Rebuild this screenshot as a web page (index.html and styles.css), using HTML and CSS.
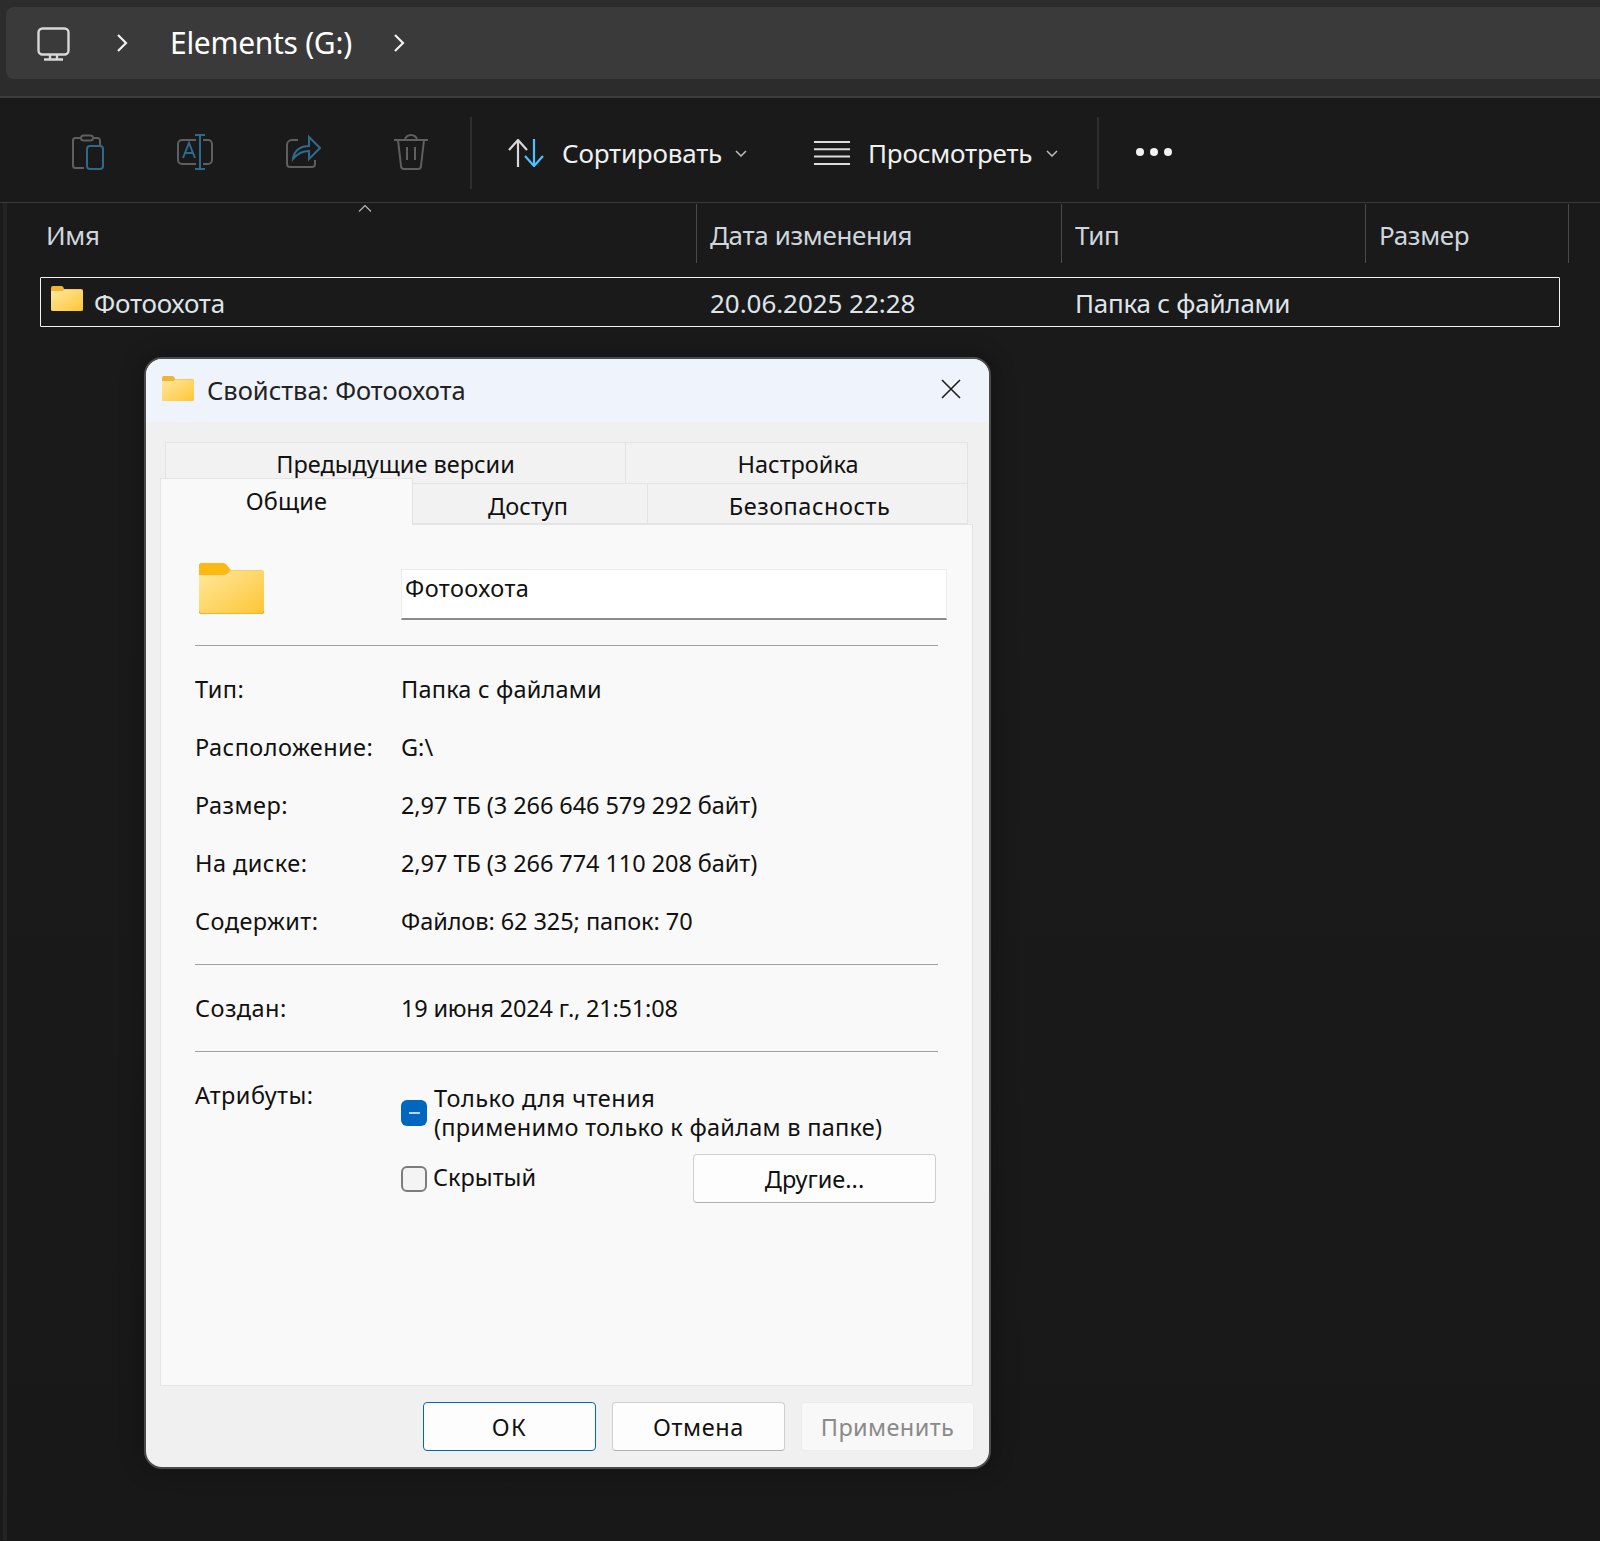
FILE: index.html
```html
<!DOCTYPE html>
<html lang="ru">
<head>
<meta charset="utf-8">
<title>Свойства: Фотоохота</title>
<link rel="stylesheet" href="styles.css">
</head>
<body>
<svg class="defs" width="0" height="0" aria-hidden="true">
  <defs>
    <linearGradient id="fg" x1="0" y1="0" x2="1" y2="1">
      <stop offset="0" stop-color="#ffe89e"/><stop offset="1" stop-color="#fdc636"/>
    </linearGradient>
    <symbol id="folder" viewBox="0 0 65 51">
      <path d="M3 0h20c2 0 3 .6 4.500 2l4.500 5h30a3 3 0 0 1 3 3v38a3 3 0 0 1-3 3H3a3 3 0 0 1-3-3V3a3 3 0 0 1 3-3z" fill="#f3bd4d"/>
      <path d="M3 0h20c2 0 3 .6 4.500 2L31 6.500c-1.500 2-3 4.500-6 5.500H0V3a3 3 0 0 1 3-3z" fill="#fdb913"/>
      <path d="M0 12h25c3 0 5-2.500 6.500-4.500H62a3 3 0 0 1 3 3V47.500a3 3 0 0 1-3 2.500H3a3 3 0 0 1-3-2.500z" fill="url(#fg)"/>
      <path d="M0 48a3 3 0 0 0 3 3h59a3 3 0 0 0 3-3" fill="none" stroke="#e9ad2e" stroke-width="1"/>
    </symbol>
    <symbol id="folder-s" viewBox="0 0 32 25">
      <path d="M2 0h8c1 0 2 .5 2.500 1.500L13 3h17a2 2 0 0 1 2 2v18a2 2 0 0 1-2 2H2a2 2 0 0 1-2-2V2a2 2 0 0 1 2-2z" fill="#f0b534"/>
      <path d="M0 5h11c1 0 1.500-.6 2-1.500h17a2 2 0 0 1 2 2V23a2 2 0 0 1-2 2H2a2 2 0 0 1-2-2z" fill="url(#fg)"/>
    </symbol>
  </defs>
</svg>

<header class="top">
  <nav class="address">
    <svg class="i-pc" viewBox="0 0 33 34" fill="none" stroke="#d8d8d8" stroke-width="2.400"><rect x="1.500" y="1.500" width="30" height="26" rx="4"/><path d="M7 32.500h19M13 28v4M20 28v4"/></svg>
    <svg class="i-chev first" viewBox="0 0 12 18" fill="none" stroke="#f0f0f0" stroke-width="2.200"><path d="M2 1l8 8-8 8"/></svg>
    <span class="crumb">Elements (G:)</span>
    <svg class="i-chev" viewBox="0 0 12 18" fill="none" stroke="#f0f0f0" stroke-width="2.200"><path d="M2 1l8 8-8 8"/></svg>
  </nav>
</header>

<section class="toolbar">
  <div class="tool-icons">
    <svg class="tool" viewBox="0 0 36 36" fill="none" stroke-width="2"><path d="M12 4H6.500A2.500 2.500 0 0 0 4 6.500v25A2.500 2.500 0 0 0 6.500 34H15M25 4h3.500A2.500 2.500 0 0 1 31 6.500V11" stroke="#5f5f5f"/><rect x="12" y="1.500" width="12" height="5" rx="2.500" stroke="#5f5f5f"/><rect x="18" y="12" width="16" height="23" rx="3" stroke="#2f6a8c"/></svg>
    <svg class="tool" viewBox="0 0 36 36" fill="none" stroke-width="2"><path d="M19 6H5a4 4 0 0 0-4 4v16a4 4 0 0 0 4 4h14M26 6h5a4 4 0 0 1 4 4v16a4 4 0 0 1-4 4h-5" stroke="#5f5f5f"/><path d="M18 1h10M23 1v34M18 35h10M6 24l6-15 6 15M8 19h8" stroke="#2f6a8c"/></svg>
    <svg class="tool" viewBox="0 0 36 36" fill="none" stroke-width="2"><path d="M13 6H7a5 5 0 0 0-5 5v19a3 3 0 0 0 3 3h22a3 3 0 0 0 3-3v-4" stroke="#5f5f5f"/><path d="M8 25c1-9 8-13 16-13V3l11 11-11 11v-8c-7 0-12 3-16 8z" stroke="#2f6a8c"/></svg>
    <svg class="tool" viewBox="0 0 36 36" fill="none" stroke="#5f5f5f" stroke-width="2"><path d="M1 6h34M12 6c0-3 3-5 6-5s6 2 6 5M5 6l3 26a3 3 0 0 0 3 3h14a3 3 0 0 0 3-3l3-26M14 13v13M22 13v13"/></svg>
  </div>
  <span class="sep"></span>
  <button class="cmd sort">
    <svg class="i-sort" viewBox="0 0 36 28" fill="none" stroke-width="2.200"><path d="M10 28V1M1 11L10 1l9 10" stroke="#d8d8d8"/><path d="M26 0v27M17 17l9 10 9-10" stroke="#4cc2ff"/></svg>
    <span>Сортировать</span>
    <svg class="i-down" viewBox="0 0 12 7" fill="none" stroke="#bdbdbd" stroke-width="1.500"><path d="M1 1l5 5 5-5"/></svg>
  </button>
  <button class="cmd view">
    <svg class="i-view" viewBox="0 0 36 24" fill="none" stroke="#dcdcdc" stroke-width="2"><path d="M0 1h36M0 8.300h36M0 15.600h36M0 23h36"/></svg>
    <span>Просмотреть</span>
    <svg class="i-down" viewBox="0 0 12 7" fill="none" stroke="#bdbdbd" stroke-width="1.500"><path d="M1 1l5 5 5-5"/></svg>
  </button>
  <span class="sep sep2"></span>
  <div class="more"><i></i><i></i><i></i></div>
</section>

<main class="files">
  <div class="cols">
    <div class="col c-name">Имя<svg class="caret" viewBox="0 0 14 7" fill="none" stroke="#b5b5b5" stroke-width="1.200"><path d="M1 6.500l6-6 6 6"/></svg></div>
    <div class="col c-date">Дата изменения</div>
    <div class="col c-type">Тип</div>
    <div class="col c-size">Размер</div>
  </div>
  <div class="row">
    <div class="cell r-name"><svg class="fld-s"><use href="#folder-s"/></svg>Фотоохота</div>
    <div class="cell r-date">20.06.2025 22:28</div>
    <div class="cell">Папка с файлами</div>
  </div>
</main>

<div class="dialog">
  <div class="titlebar">
    <svg class="fld-s"><use href="#folder-s"/></svg>
    <span class="title">Свойства: Фотоохота</span>
    <svg class="close" viewBox="0 0 20 20" fill="none" stroke="#1c1c1c" stroke-width="1.600"><path d="M1 1l18 18M19 1L1 19"/></svg>
  </div>
  <div class="tabs">
    <div class="tabrow upper">
      <div class="tab t-prev">Предыдущие версии</div>
      <div class="tab t-set">Настройка</div>
    </div>
    <div class="tabrow lower">
      <div class="tab active">Общие</div>
      <div class="tab t-acc">Доступ</div>
      <div class="tab t-sec">Безопасность</div>
    </div>
  </div>
  <div class="panel">
    <div class="head">
      <svg class="fld-l"><use href="#folder"/></svg>
      <div class="name">Фотоохота</div>
    </div>
    <div class="sect grid">
      <div class="lbl">Тип:</div><div class="v-type">Папка с файлами</div>
      <div class="lbl">Расположение:</div><div>G:\</div>
      <div class="lbl">Размер:</div><div class="v-num">2,97 ТБ (3 266 646 579 292 байт)</div>
      <div class="lbl">На диске:</div><div class="v-num">2,97 ТБ (3 266 774 110 208 байт)</div>
      <div class="lbl">Содержит:</div><div class="v-num">Файлов: 62 325; папок: 70</div>
    </div>
    <div class="sect grid">
      <div class="lbl">Создан:</div><div class="v-date">19 июня 2024 г., 21:51:08</div>
    </div>
    <div class="attrs">
      <div class="attr-label lbl">Атрибуты:</div>
      <div class="attr-body">
        <div class="ro">
          <span class="cb on"><i></i></span>
          <div class="ro-text"><span class="ro-first">Только для чтения</span><br>(применимо только к файлам в папке)</div>
        </div>
        <div class="hid">
          <span class="cb"></span>
          <span class="hid-text">Скрытый</span>
          <button class="btn other">Другие...</button>
        </div>
      </div>
    </div>
  </div>
  <div class="footer">
    <button class="btn ok">ОК</button>
    <button class="btn cancel">Отмена</button>
    <button class="btn off">Применить</button>
  </div>
</div>
</body>
</html>
```
FILE: styles.css
```css
* { box-sizing: border-box; }
html, body { margin: 0; }
body {
  width: 1600px; height: 1541px; overflow: hidden; position: relative;
  background: #181818;
  font-family: "Noto Sans", "Open Sans", sans-serif;
}
.defs { position: absolute; }
button { font-family: inherit; margin: 0; padding: 0; background: none; border: 0; }

/* address bar */
.top { height: 98px; background: #2c2c2c; border-bottom: 2px solid #3c3c3c; padding: 7px 0 0 6px; }
.address {
  height: 72px; background: #3a3a3a; border-radius: 8px 0 0 8px;
  display: flex; align-items: center; padding-left: 31px; color: #fff;
}
.i-pc { width: 33px; height: 34px; margin-top: 2px; }
.i-chev { width: 12px; height: 18px; }
.i-chev.first { margin-left: 46px; }
.crumb { font-size: 30px; margin: -2px 44px 0 42px; width: 179px; white-space: nowrap; letter-spacing: -.3px; }

/* command bar */
.toolbar {
  height: 106px; background: #1a1a1a; border-bottom: 2px solid #3a3a3a;
  display: flex; align-items: center; padding: 6px 0 0 71px; color: #f0f0f0; font-size: 26px;
}
.tool-icons { display: flex; gap: 72px; margin-left: -2px; margin-top: -2px; }
.tool { width: 36px; height: 36px; }
.sep { width: 2px; height: 72px; background: #2e2e2e; margin-left: 41px; }
.sep2 { margin-left: 39px; }
.cmd { display: flex; align-items: center; color: #f0f0f0; font-size: 26px; letter-spacing: -.2px; white-space: nowrap; }
.cmd span { display: block; }
.sort { margin-left: 36px; }
.i-sort { width: 36px; height: 28px; margin-right: 18px; }
.sort span { width: 158px; }
.i-down { width: 12px; height: 7px; margin-left: 15px; }
.view { margin-left: 67px; }
.i-view { width: 36px; height: 24px; margin-right: 18px; }
.view span { width: 163px; }
.more { display: flex; gap: 6px; margin-left: 37px; margin-top: -2px; }
.more i { width: 8px; height: 8px; border-radius: 50%; background: #f2f2f2; }

/* file list */
.files {
  margin-top: -1px; padding: 1px 0 0 5px; min-height: 1337px;
  background: linear-gradient(#1a1a1a 400px, #181818 1300px);
  box-shadow: inset 3px 0 0 #1a1a1a, inset 7px 0 0 #232323;
}
.cols { display: flex; height: 59px; color: #cfd6dc; font-size: 26px; letter-spacing: -.35px; }
.col { display: flex; align-items: center; padding: 3px 0 0 13px; border-right: 1px solid #4a4a4a; white-space: nowrap; position: relative; }
.c-name { width: 692px; padding-left: 41px; }
.c-date { width: 365px; }
.c-type { width: 304px; }
.c-size { width: 203px; }
.caret { position: absolute; left: 353px; top: 1px; width: 14px; height: 7px; }
.row {
  display: flex; align-items: center; height: 50px; width: 1520px; margin: 14px 0 0 35px;
  border: 1px solid #f2f2f2; color: #dfe4e8; font-size: 26px; border-radius: 1px;
  letter-spacing: -.25px; padding-top: 1px;
}
.cell { white-space: nowrap; }
.r-name { width: 669px; padding-left: 10px; display: flex; align-items: center; }
.r-name .fld-s { margin-right: 11px; margin-top: -8px; }
.r-date { width: 365px; letter-spacing: -.05px; }
.fld-s { width: 32px; height: 25px; flex: none; }

/* dialog */
.dialog {
  position: absolute; left: 144px; top: 357px; width: 847px; height: 1112px;
  background: #f0f0f0; border: 2px solid #4b4b4b; border-radius: 18px; overflow: hidden;
  color: #111; font-size: 23.500px; box-shadow: 0 0 24px rgba(0,0,0,.3);
}
.titlebar { height: 63px; background: #eff3fb; display: flex; align-items: center; padding-left: 16px; }
.titlebar .fld-s { margin-top: -4px; }
.title { margin-left: 13px; font-size: 25.500px; color: #222; white-space: nowrap; margin-top: -2px; }
.close { width: 20px; height: 20px; margin-left: auto; margin-right: 28px; margin-top: -4px; }
.tabs { padding: 20px 0 0 14px; height: 102px; }
.tabrow { display: flex; }
.tab { display: flex; align-items: center; justify-content: center; background: #f2f2f2; border: 1px solid #e4e4e4; white-space: nowrap; border-left-width: 0; }
.upper { height: 41px; margin-left: 5px; }
.t-prev { width: 461px; border-left-width: 1px; padding-top: 2px; border-bottom-width: 0; }
.t-set { width: 342px; padding: 2px 0 0 3px; border-bottom-width: 0; }
.lower { height: 41px; }
.active { width: 253px; height: 47px; margin-top: -5px; background: #f9f9f9; border-left-width: 1px; border-bottom: 0; position: relative; z-index: 1; padding-bottom: 2px; letter-spacing: .2px; }
.t-acc { width: 235px; padding: 4px 4px 0 0; }
.t-sec { width: 320px; padding: 4px 0 0 4px; letter-spacing: .5px; }
.panel { width: 813px; height: 862px; margin-left: 14px; background: #f9f9f9; border: 1px solid #e4e4e4; padding-left: 34px; }
.head { display: grid; grid-template-columns: 206px 546px; height: 120px; padding-top: 38px; }
.fld-l { width: 65px; height: 51px; margin-left: 4px; }
.name {
  height: 51px; margin-top: 6px; background: #fff; border: 1px solid #ececec; border-bottom: 2px solid #8a8a8a;
  padding: 2px 3px; line-height: 32px; letter-spacing: .45px;
}
.sect { width: 743px; border-top: 1px solid #a0a0a0; padding: 14px 0; }
.grid { display: grid; grid-template-columns: 206px 1fr; grid-auto-rows: 58px; align-items: center; }
.lbl { letter-spacing: .45px; }
.v-type { letter-spacing: .2px; }
.v-num { letter-spacing: -.07px; }
.v-date { letter-spacing: -.2px; }
.attrs { width: 743px; border-top: 1px solid #a0a0a0; display: grid; grid-template-columns: 206px 1fr; }
.attr-label { padding-top: 27px; }
.attr-body { padding-top: 32px; }
.ro { display: flex; align-items: center; }
.ro-text { line-height: 29px; margin-left: 7px; white-space: nowrap; letter-spacing: .26px; }
.ro-first { letter-spacing: .48px; }
.cb { display: block; width: 26px; height: 26px; border-radius: 6px; background: #f4f4f4; border: 2px solid #7c7c7c; flex: none; }
.cb.on { background: #0067c0; border: 0; display: flex; align-items: center; justify-content: center; }
.cb.on i { width: 11px; height: 2px; background: #bcd6ee; }
.hid { display: flex; align-items: center; margin-top: 12px; }
.hid-text { margin: -3px 0 0 6px; width: 260px; white-space: nowrap; }
.btn {
  display: block; width: 172px; height: 49px; background: #fdfdfd; border: 1px solid #cfcfcf; border-bottom-color: #b0b0b0;
  border-radius: 4px; font-size: 23.500px; color: #111; flex: none;
}
.other { width: 243px; }
.footer { display: flex; gap: 16px; padding: 16px 0 0 277px; }
.ok { width: 173px; border-color: #0067c0; border-width: 1.500px; letter-spacing: 1.500px; }
.cancel { width: 173px; letter-spacing: .6px; }
.off { width: 173px; color: #8a8a8a; background: #f8f8f8; border-color: #ececec; letter-spacing: .4px; }
```
